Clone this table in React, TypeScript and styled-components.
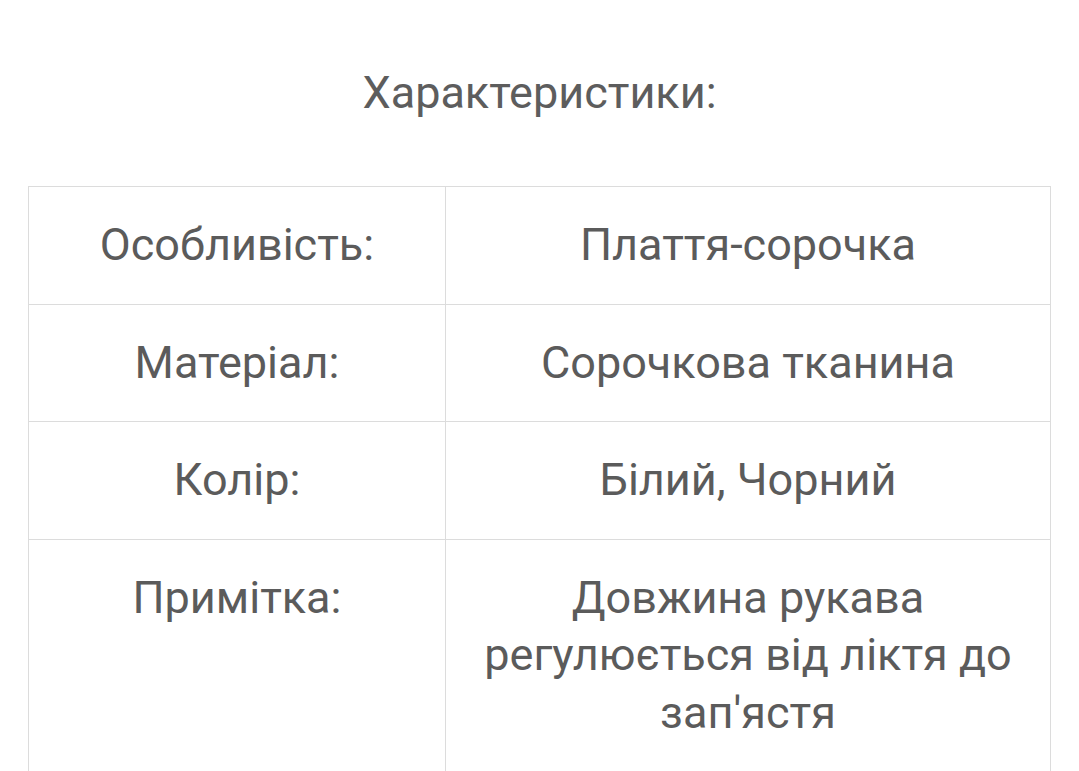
import React from 'react';
import styled, { createGlobalStyle } from 'styled-components';

const GlobalStyle = createGlobalStyle`
  html, body {
    margin: 0;
    padding: 0;
    background: #ffffff;
  }
  body {
    font-family: Roboto, 'Noto Sans', sans-serif;
    color: #5b5b5b;
  }
`;

const Page = styled.div`
  padding: 64px 28px 0 28px;
`;

const Title = styled.h2`
  margin: 0 0 64px 0;
  text-align: center;
  font-size: 45px;
  line-height: 58px;
  font-weight: 400;
  color: #5d5d5d;
`;

const Table = styled.table`
  width: 1022px;
  border-collapse: collapse;
  table-layout: fixed;
`;

const Col = styled.col<{ $width: number }>`
  width: ${(p) => p.$width}px;
`;

const Cell = styled.td`
  border: 1px solid #dcdcdc;
  padding: 29px 24px 30px 24px;
  text-align: center;
  vertical-align: top;
  font-size: 45px;
  line-height: 57.6px;
  color: #5b5b5b;
`;

const rows = [
  ['Особливість:', 'Плаття-сорочка'],
  ['Матеріал:', 'Сорочкова тканина'],
  ['Колір:', 'Білий, Чорний'],
  ['Примітка:', "Довжина рукава регулюється від ліктя до зап'ястя"],
];

export default function App() {
  return (
    <>
      <GlobalStyle />
      <Page>
        <Title>Характеристики:</Title>
        <Table>
          <colgroup>
            <Col $width={417} />
            <Col $width={605} />
          </colgroup>
          <tbody>
            {rows.map(([label, value]) => (
              <tr key={label}>
                <Cell>{label}</Cell>
                <Cell>{value}</Cell>
              </tr>
            ))}
          </tbody>
        </Table>
      </Page>
    </>
  );
}
